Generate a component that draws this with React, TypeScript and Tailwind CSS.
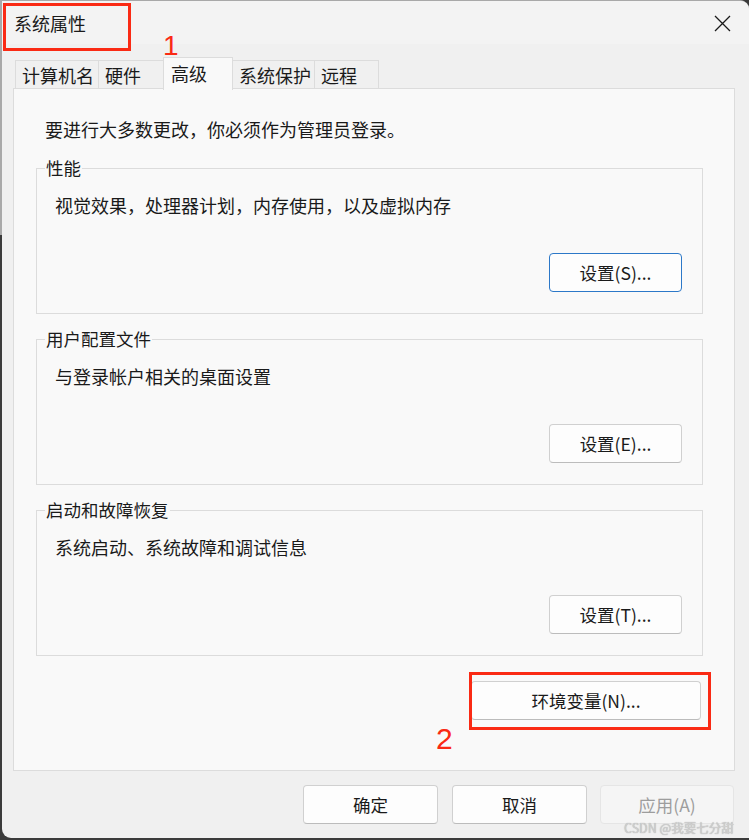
import React from "react"

const FONT = "font-['Noto_Sans_CJK_SC','Liberation_Sans',sans-serif]"

const tabs = [
  { label: "计算机名", w: "w-[84px]" },
  { label: "硬件", w: "w-[66px]" },
  { label: "高级", w: "w-[70px]", active: true },
  { label: "系统保护", w: "w-[83px]" },
  { label: "远程", w: "w-[65px]" },
]

function WinButton({
  children,
  focused = false,
  disabled = false,
  className = "",
}: {
  children: React.ReactNode
  focused?: boolean
  disabled?: boolean
  className?: string
}) {
  return (
    <button
      className={[
        "h-[39px] rounded-[4px] border text-[17.5px] leading-[24px]",
        focused
          ? "bg-[#fdfdfd] border-[#2c78c8] text-[#1a1a1a]"
          : disabled
            ? "bg-[#f5f5f5] border-[#e5e5e5] text-[#9d9d9d]"
            : "bg-[#fdfdfd] border-[#d0d0d0] border-b-[#bcbcbc] text-[#1a1a1a]",
        className,
      ].join(" ")}
    >
      {children}
    </button>
  )
}

function Group({
  title,
  desc,
  button,
  focused,
}: {
  title: string
  desc: string
  button: string
  focused?: boolean
}) {
  return (
    <div className="relative h-[146px] border border-[#dcdcdc] flex flex-col">
      <span className="absolute left-[8px] top-[-13px] px-[1px] bg-[#f9f9f9] text-[17.5px] leading-[24px]">
        {title}
      </span>
      <p className="pt-[24px] pl-[18px] text-[18px] leading-[24px]">{desc}</p>
      <WinButton focused={focused} className="mt-auto self-end mr-[20px] mb-[21px] w-[133px]">
        {button}
      </WinButton>
    </div>
  )
}

export default function App() {
  return (
    <div className={`relative w-[749px] h-[840px] overflow-hidden bg-[#3b3b3b] ${FONT} text-[#1a1a1a]`}>
      <div className="absolute left-0 top-0 w-[2px] h-[235px] bg-[#a9a9a9]" />
      <div className="ml-[2px] mt-0 w-[747px] h-[838px] border-t border-[#a8a8a8] rounded-tr-[9px] rounded-bl-[9px] bg-[#f0f0f0] flex flex-col overflow-hidden">
        {/* title bar */}
        <div className="h-[43px] bg-[#f3f3f3] flex items-center justify-between pl-[12px] pr-[18px]">
          <span className="text-[18px] leading-[24px]">系统属性</span>
          <svg width="17" height="17" viewBox="0 0 17 17" className="mt-[1px]">
            <path d="M1 1 L16 16 M16 1 L1 16" stroke="#1a1a1a" strokeWidth="1.3" fill="none" />
          </svg>
        </div>

        <div className="flex-1 flex flex-col pl-[11px] pr-[14px] pt-[13px]">
          {/* tabs */}
          <div className="flex items-end h-[31px] pl-[2px] relative z-10">
            {tabs.map((t) =>
              t.active ? (
                <div
                  key={t.label}
                  className={`${t.w} -ml-px h-[33px] -mb-[2px] border border-b-0 border-[#dcdcdc] bg-[#f9f9f9] pl-[7px] pt-[3px] text-[18px] leading-[24px]`}
                >
                  {t.label}
                </div>
              ) : (
                <div
                  key={t.label}
                  className={`${t.w} -ml-px first:ml-0 h-[29px] -mb-px border border-[#dcdcdc] bg-[#f0f0f0] pl-[6px] pt-[2px] text-[18px] leading-[24px]`}
                >
                  {t.label}
                </div>
              ),
            )}
          </div>

          {/* panel */}
          <div className="h-[683px] border border-[#dcdcdc] bg-[#f9f9f9] flex flex-col pl-[22px] pr-[31px]">
            <p className="pt-[28px] pl-[9px] text-[18px] leading-[24px]">要进行大多数更改，你必须作为管理员登录。</p>
            <div className="mt-[27px] flex flex-col gap-[25px]">
              <Group title="性能" desc="视觉效果，处理器计划，内存使用，以及虚拟内存" button="设置(S)..." focused />
              <Group title="用户配置文件" desc="与登录帐户相关的桌面设置" button="设置(E)..." />
              <Group title="启动和故障恢复" desc="系统启动、系统故障和调试信息" button="设置(T)..." />
            </div>
            <WinButton className="mt-[25px] self-end w-[230px] mr-[2px]">环境变量(N)...</WinButton>
          </div>

          {/* footer buttons */}
          <div className="flex justify-end pt-[14px] mr-[1px]">
            <WinButton className="w-[135px]">确定</WinButton>
            <WinButton className="w-[135px] ml-[14px]">取消</WinButton>
            <WinButton className="w-[134px] ml-[13px]" disabled>应用(A)</WinButton>
          </div>
        </div>
      </div>

      {/* annotations */}
      <div className="absolute left-[3px] top-[3px] w-[128px] h-[48px] border-[3px] border-[#fa2a14]" />
      <span className="absolute left-[163px] top-[30px] text-[28px] leading-[32px] text-[#fa2a14] font-['Liberation_Sans',sans-serif]">1</span>
      <div className="absolute left-[469px] top-[672px] w-[242px] h-[58px] border-[3px] border-[#fa2a14]" />
      <span className="absolute left-[436px] top-[722px] text-[30px] leading-[34px] text-[#fa2a14] font-['Liberation_Sans',sans-serif]">2</span>
      <span className="absolute left-[624px] top-[819px] text-[12.5px] leading-[18px] text-[#cfcfcf] [text-shadow:0_0_1px_#a0a0a0]">
        CSDN @我要七分甜
      </span>
    </div>
  )
}
